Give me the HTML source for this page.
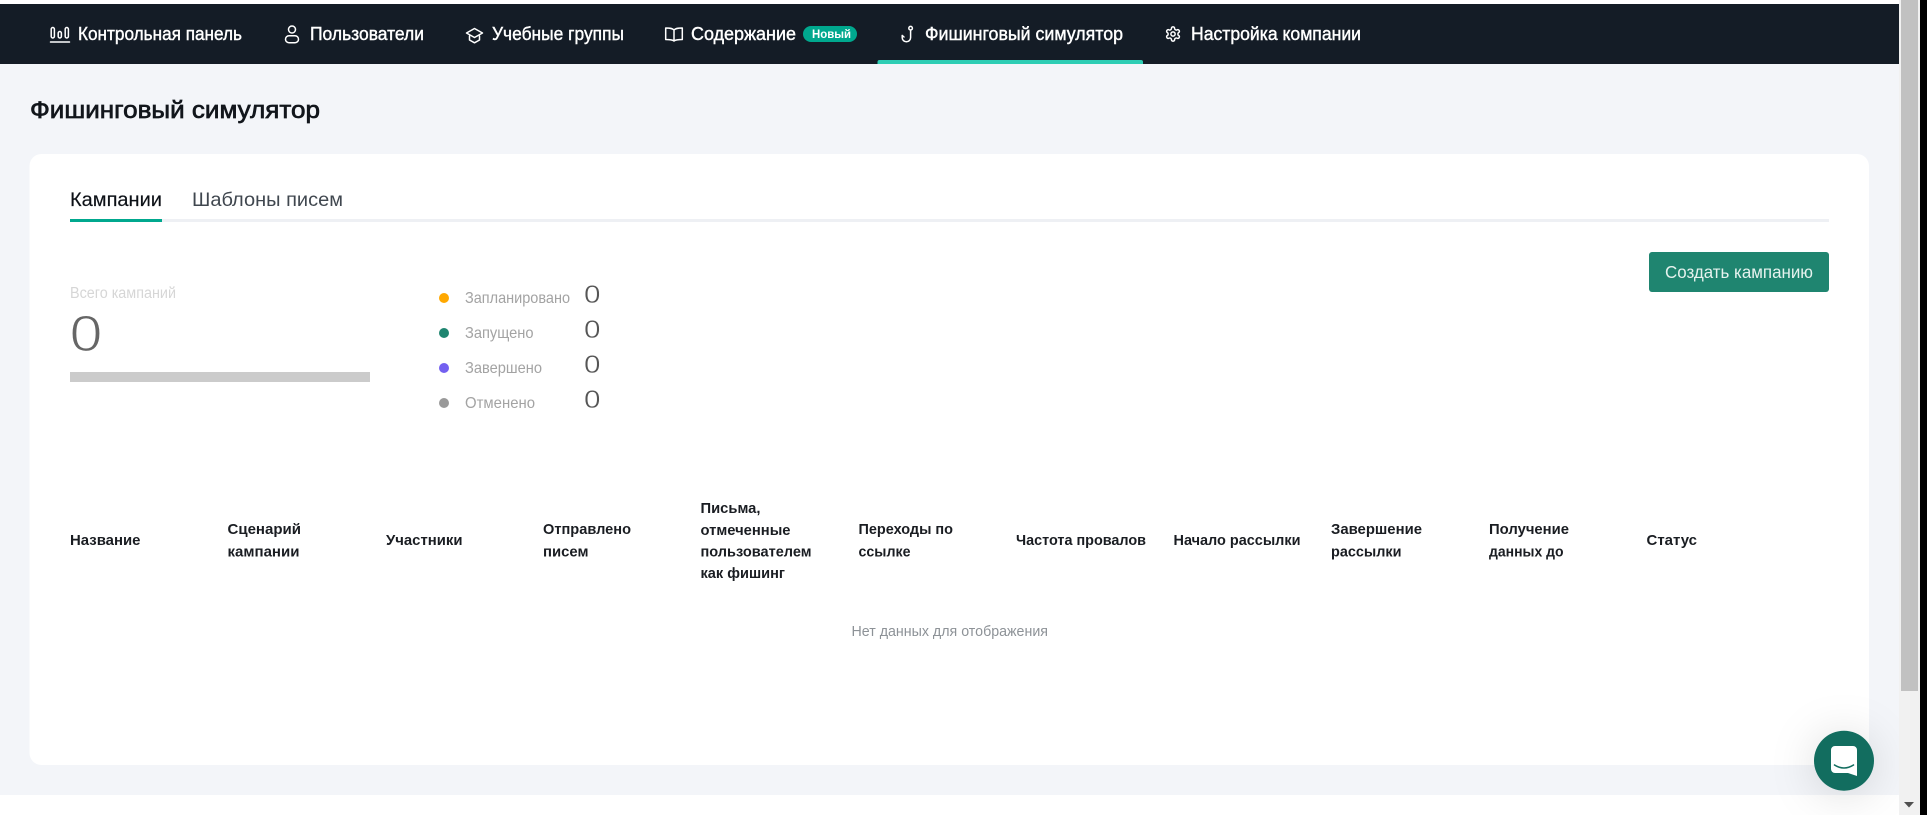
<!DOCTYPE html>
<html lang="ru">
<head>
<meta charset="utf-8">
<title>Фишинговый симулятор</title>
<style>
html,body{margin:0;padding:0;width:1927px;height:815px;overflow:hidden;background:#000}
svg{display:block;font-family:"Liberation Sans","Noto Sans CJK SC",sans-serif}
.n{font-size:18px;fill:#fff;stroke:#fff;stroke-width:.4}
.i{fill:none;stroke:#fff;stroke-width:1.5;stroke-linecap:round;stroke-linejoin:round}
.h{font-size:15px;font-weight:700;fill:#1a1d22}
.l{font-size:16px;fill:#a3a3a3}
.z{font-size:25px;fill:#555;stroke:#fff;stroke-width:.4}
</style>
</head>
<body>
<svg width="1927" height="815" viewBox="0 0 1927 815" xmlns="http://www.w3.org/2000/svg">
  <rect width="1927" height="815" fill="#fff"/>
  <rect x="0" y="64" width="1899" height="731" fill="#f3f5f9"/>

  <!-- nav -->
  <rect x="0" y="4" width="1899" height="60" fill="#141c26"/>

  <g class="i">
    <rect x="51.2" y="27.5" width="3.2" height="10.5" rx="1.6"/>
    <rect x="58.2" y="31.5" width="3.2" height="6.5" rx="1.6"/>
    <rect x="65.2" y="27.5" width="3.2" height="10.5" rx="1.6"/>
    <path d="M50.5 42H69.5"/>
    <circle cx="292" cy="29.5" r="3.5"/>
    <rect x="285.5" y="35.7" width="13" height="7" rx="3.5"/>
    <path d="M474.5 28.5L482.5 33L474.5 37.5L466.5 33Z"/>
    <path d="M469.5 36V40L474.5 42.8L479.5 40V36"/>
    <path d="M674 30C672.5 28.4 670.5 28 665.7 28V39.5C670.5 39.5 672.5 39.8 674 41C675.5 39.8 677.5 39.5 682.3 39.5V28C677.5 28 675.5 28.4 674 30ZM674 30V41"/>
    <circle cx="910.6" cy="28.2" r="1.8"/>
    <path d="M910.6 30V37.6A4.2 4.2 0 0 1 902.2 37.6V35.4L904 37"/>
    <g transform="translate(1164.5 25.5) scale(.71)" style="stroke-width:2.1">
      <path d="M12.22 2h-.44a2 2 0 0 0-2 2v.18a2 2 0 0 1-1 1.73l-.43.25a2 2 0 0 1-2 0l-.15-.08a2 2 0 0 0-2.73.73l-.22.38a2 2 0 0 0 .73 2.73l.15.1a2 2 0 0 1 1 1.72v.51a2 2 0 0 1-1 1.74l-.15.09a2 2 0 0 0-.73 2.73l.22.38a2 2 0 0 0 2.73.73l.15-.08a2 2 0 0 1 2 0l.43.25a2 2 0 0 1 1 1.73V20a2 2 0 0 0 2 2h.44a2 2 0 0 0 2-2v-.18a2 2 0 0 1 1-1.73l.43-.25a2 2 0 0 1 2 0l.15.08a2 2 0 0 0 2.73-.73l.22-.39a2 2 0 0 0-.73-2.73l-.15-.08a2 2 0 0 1-1-1.74v-.5a2 2 0 0 1 1-1.74l.15-.09a2 2 0 0 0 .73-2.73l-.22-.38a2 2 0 0 0-2.73-.73l-.15.08a2 2 0 0 1-2 0l-.43-.25a2 2 0 0 1-1-1.73V4a2 2 0 0 0-2-2z"/>
      <circle cx="12" cy="12" r="3"/>
    </g>
  </g>

  <text class="n" x="78" y="40" textLength="164" lengthAdjust="spacingAndGlyphs">Контрольная панель</text>
  <text class="n" x="310" y="40" textLength="114" lengthAdjust="spacingAndGlyphs">Пользователи</text>
  <text class="n" x="492" y="40" textLength="132" lengthAdjust="spacingAndGlyphs">Учебные группы</text>
  <text class="n" x="691" y="40" textLength="105" lengthAdjust="spacingAndGlyphs">Содержание</text>
  <rect x="803" y="26" width="54" height="16" rx="8" fill="#00a88e"/>
  <text x="812" y="38" font-size="12" font-weight="700" fill="#fff" textLength="39" lengthAdjust="spacingAndGlyphs">Новый</text>
  <text class="n" x="925" y="40" textLength="198" lengthAdjust="spacingAndGlyphs">Фишинговый симулятор</text>
  <text class="n" x="1191" y="40" textLength="170" lengthAdjust="spacingAndGlyphs">Настройка компании</text>
  <path d="M877.5 64V62a2 2 0 0 1 2-2H1141a2 2 0 0 1 2 2V64Z" fill="#2dcdb4"/>

  <!-- title -->
  <text x="30" y="118" font-size="24.5" fill="#12161c" stroke="#12161c" stroke-width=".7" textLength="290" lengthAdjust="spacingAndGlyphs">Фишинговый симулятор</text>

  <!-- card -->
  <rect x="29.5" y="154" width="1839.5" height="611" rx="12" fill="#fff"/>

  <!-- tabs -->
  <text x="70" y="206" font-size="19.5" fill="#0d1117" stroke="#0d1117" stroke-width=".15" textLength="92" lengthAdjust="spacingAndGlyphs">Кампании</text>
  <text x="192" y="206" font-size="19.5" fill="#40474f" textLength="151" lengthAdjust="spacingAndGlyphs">Шаблоны писем</text>
  <rect x="70" y="219" width="1759" height="3" fill="#eef0f4"/>
  <rect x="70" y="219" width="92" height="3" fill="#00a88e"/>

  <!-- stats -->
  <text x="70" y="298" font-size="15.5" fill="#d6d6d6" textLength="106" lengthAdjust="spacingAndGlyphs">Всего кампаний</text>
  <text x="69.5" y="351" font-size="51" fill="#666" stroke="#fff" stroke-width="1.3" textLength="33" lengthAdjust="spacingAndGlyphs">0</text>
  <rect x="70" y="372" width="300" height="10" fill="#cbcbcb"/>

  <circle cx="444" cy="298" r="5" fill="#ffa800"/>
  <circle cx="444" cy="333" r="5" fill="#1f8570"/>
  <circle cx="444" cy="368" r="5" fill="#7360f0"/>
  <circle cx="444" cy="403" r="5" fill="#999"/>
  <text class="l" x="465" y="303" textLength="105" lengthAdjust="spacingAndGlyphs">Запланировано</text>
  <text class="l" x="465" y="338" textLength="68.5" lengthAdjust="spacingAndGlyphs">Запущено</text>
  <text class="l" x="465" y="373" textLength="77" lengthAdjust="spacingAndGlyphs">Завершено</text>
  <text class="l" x="465" y="408" textLength="70" lengthAdjust="spacingAndGlyphs">Отменено</text>
  <text class="z" x="584" y="303" textLength="16.5" lengthAdjust="spacingAndGlyphs">0</text>
  <text class="z" x="584" y="338" textLength="16.5" lengthAdjust="spacingAndGlyphs">0</text>
  <text class="z" x="584" y="373" textLength="16.5" lengthAdjust="spacingAndGlyphs">0</text>
  <text class="z" x="584" y="408" textLength="16.5" lengthAdjust="spacingAndGlyphs">0</text>

  <!-- button -->
  <rect x="1649" y="252" width="180" height="40" rx="3" fill="#1f8570"/>
  <text x="1665" y="278" font-size="17.5" fill="#e6f2ee" textLength="148" lengthAdjust="spacingAndGlyphs">Создать кампанию</text>

  <!-- table head -->
  <text class="h" x="70" y="545" textLength="70.5" lengthAdjust="spacingAndGlyphs">Название</text>
  <text class="h" x="227.5" y="534" textLength="73.5" lengthAdjust="spacingAndGlyphs">Сценарий</text>
  <text class="h" x="227.5" y="556.5" textLength="72" lengthAdjust="spacingAndGlyphs">кампании</text>
  <text class="h" x="386" y="545" textLength="76.5" lengthAdjust="spacingAndGlyphs">Участники</text>
  <text class="h" x="543" y="534" textLength="88" lengthAdjust="spacingAndGlyphs">Отправлено</text>
  <text class="h" x="543" y="556.5" textLength="45.5" lengthAdjust="spacingAndGlyphs">писем</text>
  <text class="h" x="700.5" y="513" textLength="60" lengthAdjust="spacingAndGlyphs">Письма,</text>
  <text class="h" x="700.5" y="535" textLength="90" lengthAdjust="spacingAndGlyphs">отмеченные</text>
  <text class="h" x="700.5" y="556.5" textLength="111" lengthAdjust="spacingAndGlyphs">пользователем</text>
  <text class="h" x="700.5" y="578" textLength="84.5" lengthAdjust="spacingAndGlyphs">как фишинг</text>
  <text class="h" x="858.5" y="534" textLength="94.5" lengthAdjust="spacingAndGlyphs">Переходы по</text>
  <text class="h" x="858.5" y="556.5" textLength="52" lengthAdjust="spacingAndGlyphs">ссылке</text>
  <text class="h" x="1016" y="545" textLength="130" lengthAdjust="spacingAndGlyphs">Частота провалов</text>
  <text class="h" x="1173.5" y="545" textLength="127" lengthAdjust="spacingAndGlyphs">Начало рассылки</text>
  <text class="h" x="1331" y="534" textLength="91" lengthAdjust="spacingAndGlyphs">Завершение</text>
  <text class="h" x="1331" y="556.5" textLength="70.5" lengthAdjust="spacingAndGlyphs">рассылки</text>
  <text class="h" x="1489" y="534" textLength="80" lengthAdjust="spacingAndGlyphs">Получение</text>
  <text class="h" x="1489" y="556.5" textLength="74.5" lengthAdjust="spacingAndGlyphs">данных до</text>
  <text class="h" x="1646.5" y="545" textLength="50.5" lengthAdjust="spacingAndGlyphs">Статус</text>

  <text x="851.5" y="636" font-size="15" fill="#8d9297" textLength="196.5" lengthAdjust="spacingAndGlyphs">Нет данных для отображения</text>

  <!-- chat -->
  <circle cx="1844" cy="760.7" r="30" fill="#126d5f" style="filter:drop-shadow(0 4px 22px rgba(0,0,0,.14))"/>
  <path d="M1835 746H1853A4 4 0 0 1 1857 750V776L1848 773H1835A4 4 0 0 1 1831 769V750A4 4 0 0 1 1835 746Z" fill="#fff"/>
  <path d="M1834.5 765Q1844 771 1853.5 765" fill="none" stroke="#126d5f" stroke-width="1.6" stroke-linecap="round"/>

  <!-- scrollbar -->
  <rect x="1899" y="0" width="21" height="815" fill="#f1f1f1"/>
  <rect x="1901" y="0" width="17" height="691" fill="#c1c1c1"/>
  <path d="M1904 802H1914L1909 807.5Z" fill="#505050"/>
  <rect x="1920" y="0" width="7" height="815" fill="#000"/>
</svg>
</body>
</html>
